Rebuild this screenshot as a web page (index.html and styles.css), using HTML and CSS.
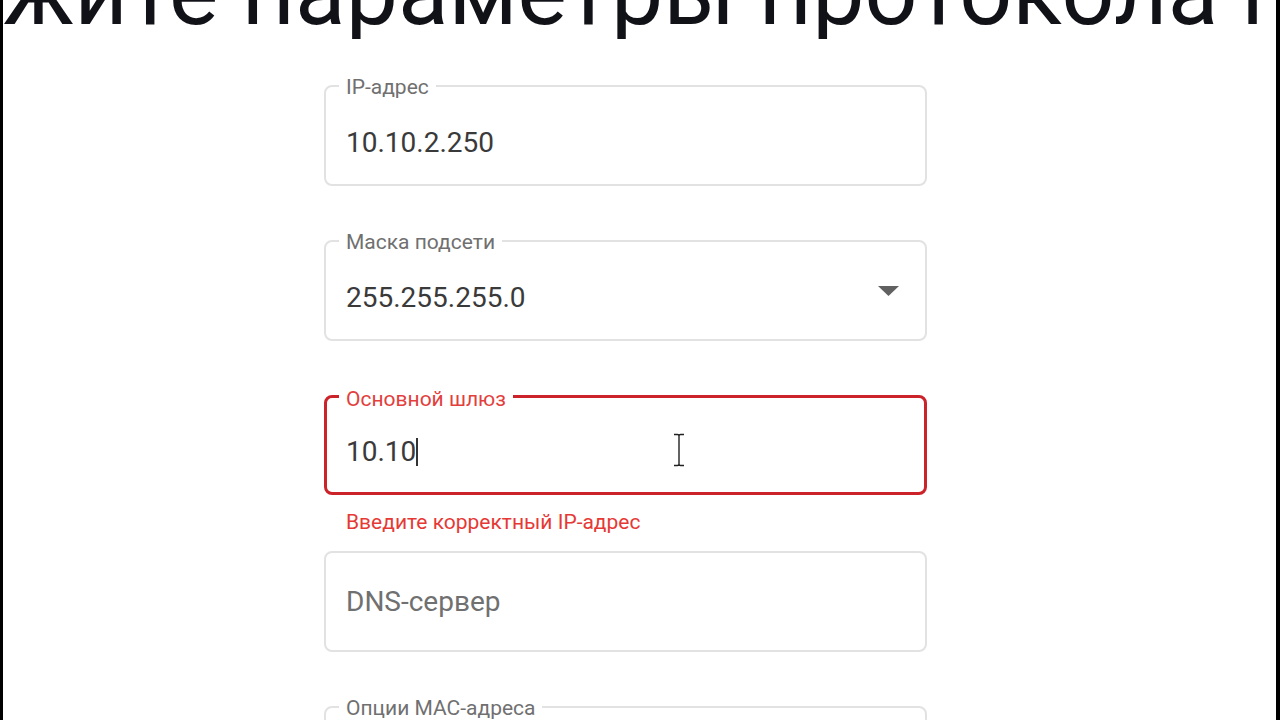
FILE: index.html
```html
<!DOCTYPE html>
<html lang="ru">
<head>
<meta charset="utf-8">
<title>Параметры протокола</title>
<link rel="stylesheet" href="styles.css">
</head>
<body>
<div class="frame">
  <div class="title"><span class="title-text">жите параметры протокола п</span></div>
  <form class="form">
    <div class="field">
      <div class="box">
        <span class="label">IP-адрес</span>
        <span class="value">10.10.2.250</span>
      </div>
    </div>
    <div class="field">
      <div class="box">
        <span class="label">Маска подсети</span>
        <span class="value">255.255.255.0</span>
        <svg class="arrow" width="21" height="10" viewBox="0 0 21 10"><path d="M0 0 H21 L10.5 10 Z" fill="#616161"/></svg>
      </div>
    </div>
    <div class="field field-error">
      <div class="box box-error">
        <span class="label label-error">Основной шлюз</span>
        <span class="value">10.10<span class="caret"></span></span>
        <svg class="ibeam" width="14" height="34" viewBox="0 0 14 34">
          <path d="M2 1.5 H5.5 Q7 1.5 7 3 Q7 1.5 8.5 1.5 H12 M7 3 V31 M2 32.5 H5.5 Q7 32.5 7 31 Q7 32.5 8.5 32.5 H12" fill="none" stroke="#fff" stroke-width="3.2"/>
          <path d="M2 1.5 H5.5 Q7 1.5 7 3 Q7 1.5 8.5 1.5 H12 M7 3 V31 M2 32.5 H5.5 Q7 32.5 7 31 Q7 32.5 8.5 32.5 H12" fill="none" stroke="#222" stroke-width="1.4"/>
        </svg>
      </div>
      <div class="helper">Введите корректный IP-адрес</div>
    </div>
    <div class="field">
      <div class="box box-plain">
        <span class="value placeholder">DNS-сервер</span>
      </div>
    </div>
    <div class="field">
      <div class="box">
        <span class="label">Опции MAC-адреса</span>
        <span class="value"></span>
      </div>
    </div>
  </form>
</div>
</body>
</html>
```

FILE: styles.css
```css
html, body {
  margin: 0;
  padding: 0;
  background: #000;
}

.frame {
  box-sizing: border-box;
  width: 1280px;
  height: 720px;
  overflow: hidden;
  background: #fff;
  border-left: 3px solid #000;
  border-right: 4px solid #000;
  font-family: Roboto, "Liberation Sans", sans-serif;
}

.title {
  height: 39px;
  overflow: hidden;
  display: flex;
  align-items: flex-end;
  white-space: nowrap;
}

.title-text {
  font-size: 93px;
  line-height: 1;
  color: #111118;
  padding-left: 0;
}

.form {
  width: 603px;
  margin: 46px 0 0 321px;
}

.field {
  margin-bottom: 54px;
}

.field-error {
  margin-bottom: 0;
}

.box {
  position: relative;
  box-sizing: border-box;
  height: 101px;
  border: 2px solid #e2e2e2;
  border-radius: 8px;
  padding: 15px 20px 0 20px;
  display: flex;
  align-items: center;
}

.box-plain {
  padding-top: 0;
}

.box-error {
  height: 100px;
  border: 3px solid #cc2229;
  padding: 14px 19px 0 19px;
}

.label {
  position: absolute;
  top: -12px;
  left: 13px;
  padding: 0 7px;
  background: #fff;
  font-size: 21px;
  line-height: 24px;
  color: #707070;
}

.label-error {
  top: -11px;
  left: 12px;
  color: #e2403c;
}

.value {
  flex: 1;
  font-size: 28px;
  line-height: 34px;
  color: #3a3a3a;
  display: flex;
  align-items: center;
}

.placeholder {
  color: #707070;
}

.caret {
  display: inline-block;
  width: 2px;
  height: 28px;
  background: #333;
  margin-left: 0;
}

.arrow {
  margin-right: 6px;
  margin-bottom: 14px;
}

.ibeam {
  position: absolute;
  left: 345px;
  top: 35px;
}

.helper {
  margin: 15px 0 17px 0;
  padding-left: 22px;
  font-size: 21px;
  line-height: 24px;
  color: #e53935;
}
```
